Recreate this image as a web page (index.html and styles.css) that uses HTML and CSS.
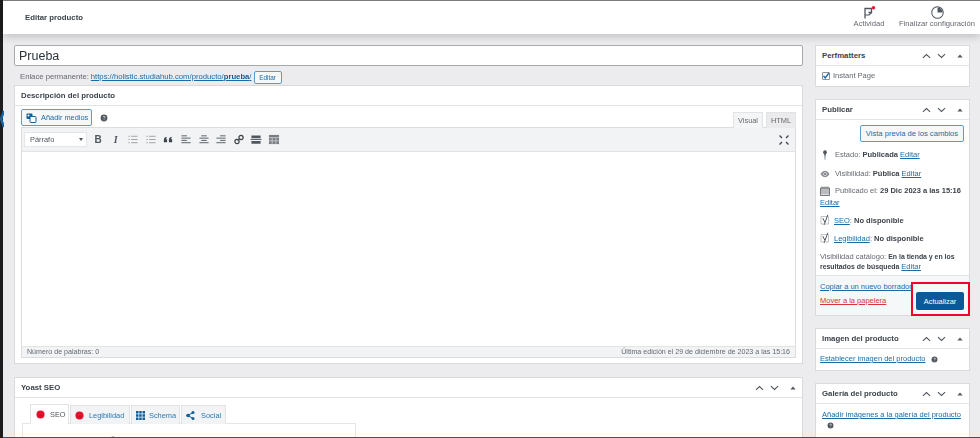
FILE: index.html
```html
<!DOCTYPE html>
<html lang="es">
<head>
<meta charset="utf-8">
<title>Editar producto</title>
<link rel="stylesheet" href="styles.css">
</head>
<body>
<svg class="defs" width="0" height="0" aria-hidden="true">
  <symbol id="up" viewBox="0 0 10 6"><path d="M1 5.2 5 1.4l4 3.8" fill="none" stroke="#50575e" stroke-width="1.2"/></symbol>
  <symbol id="down" viewBox="0 0 10 6"><path d="M1 .8 5 4.6 9 .8" fill="none" stroke="#50575e" stroke-width="1.2"/></symbol>
  <symbol id="tri" viewBox="0 0 6 4"><path d="M3 .5 5.6 3.5H.4z" fill="#50575e"/></symbol>
  <symbol id="help" viewBox="0 0 8 8"><circle cx="4" cy="4" r="3.4" fill="#50575e"/><path d="M3 3.2c0-1.2 2.1-1.2 2.1 0 0 .7-1 .7-1 1.4M4.1 5.4v.7" fill="none" stroke="#fff" stroke-width=".7"/></symbol>
  <symbol id="yoast" viewBox="0 0 10 12"><path d="M1 2.500h7.500v7.500H1z" fill="#fff" stroke="#a7aaad" stroke-width=".7"/><path d="M2.800 4.200 5 8.500 7.800 .8" fill="none" stroke="#50575e" stroke-width="1"/><path d="M5 8.500 4 11" fill="none" stroke="#50575e" stroke-width=".9"/></symbol>
  <symbol id="face" viewBox="0 0 10 10"><circle cx="5" cy="5" r="4.500" fill="#e8112d"/><path d="M3 6.500h4" stroke="#a50c20" stroke-width=".7"/><path d="M3.200 3.900h.6M6.200 3.900h.6" stroke="#a50c20" stroke-width=".8"/></symbol>
</svg>
<div class="page">
  <div class="strip"><svg class="strip-arrow" width="4" height="18" viewBox="0 0 4 18"><path d="M4 1 1 9l3 8" fill="none" stroke="#1266a8" stroke-width="2.400"/></svg></div>
  <div class="app">
    <header class="topbar">
      <h1 class="page-title">Editar producto</h1>
      <div class="top-actions">
        <div class="top-action act-one">
          <svg width="14" height="13" viewBox="0 0 14 13"><path d="M3 12.500V2.500h6.500V6.500H6.500" fill="none" stroke="#50575e" stroke-width="1.300"/><path d="M9.500 6.500 7 9H3" fill="none" stroke="#50575e" stroke-width="1.200"/><circle cx="11.500" cy="1.800" r="1.700" fill="#e8112d"/></svg>
          <span>Actividad</span>
        </div>
        <div class="top-action act-two">
          <svg width="13" height="13" viewBox="0 0 14 14"><circle cx="7" cy="7" r="6.200" fill="none" stroke="#50575e" stroke-width="1.100"/><path d="M7 7V1.500A5.500 5.500 0 0 1 12.500 7z" fill="#50575e"/></svg>
          <span>Finalizar configuración</span>
        </div>
      </div>
    </header>
    <main class="content">
      <section class="col-main">
        <div class="title-input">Prueba</div>
        <div class="permalink">
          <span class="label">Enlace permanente:</span>
          <a class="link" href="#">https://holistic.studiahub.com/producto/<b>prueba</b>/</a>
          <span class="btn btn-small">Editar</span>
        </div>
        <div class="box box-editor">
          <div class="box-head plain"><h2>Descripción del producto</h2></div>
          <div class="editor-top">
            <span class="btn btn-media">
              <svg width="11" height="10" viewBox="0 0 11 10"><rect x=".5" y=".5" width="6" height="5.500" rx="1" fill="#135e96"/><rect x="4" y="3.500" width="6" height="6" rx="1" fill="#fff" stroke="#135e96"/><circle cx="2.500" cy="2.500" r="1" fill="#fff"/></svg>
              Añadir medios
            </span>
            <svg class="help-gap" width="8" height="8"><use href="#help"/></svg>
            <div class="tabs-right">
              <span class="mode active">Visual</span>
              <span class="mode">HTML</span>
            </div>
          </div>
          <div class="editor-frame">
            <div class="toolbar">
              <span class="select">Párrafo<i class="caret"></i></span>
              <div class="tools">
                <span class="tool bold">B</span>
                <span class="tool ital">I</span>
                <svg class="ico" width="12" height="11" viewBox="0 0 12 12"><path d="M4 2.500h7M4 6h7M4 9.500h7M1 2.500h1.500M1 6h1.500M1 9.500h1.500" stroke="#9a9da1"/></svg>
                <svg class="ico" width="12" height="11" viewBox="0 0 12 12"><path d="M4 2.500h7M4 6h7M4 9.500h7M1 2.500h1.500M1 6h1.500M1 9.500h1.500" stroke="#9a9da1"/></svg>
                <svg class="ico" width="12" height="11" viewBox="0 0 12 12"><path d="M1.500 9V6.200C1.500 4.500 2.500 3.500 4.500 3v1.500c-.8.300-1 .7-1 1.200H5V9zM7 9V6.200C7 4.500 8 3.500 10 3v1.500c-.8.300-1 .7-1 1.200h1.500V9z" fill="#3c434a"/></svg>
                <svg class="ico" width="12" height="11" viewBox="0 0 12 12"><path d="M1 2h6M1 4.500h10M1 7h6M1 9.500h10" stroke="#50575e"/></svg>
                <svg class="ico" width="12" height="11" viewBox="0 0 12 12"><path d="M3 2h6M1 4.500h10M3 7h6M1 9.500h10" stroke="#50575e"/></svg>
                <svg class="ico" width="12" height="11" viewBox="0 0 12 12"><path d="M5 2h6M1 4.500h10M5 7h6M1 9.500h10" stroke="#50575e"/></svg>
                <svg class="ico" width="12" height="11" viewBox="0 0 12 12"><circle cx="3.800" cy="8.200" r="2.300" fill="none" stroke="#3c434a" stroke-width="1.300"/><circle cx="8.200" cy="3.800" r="2.300" fill="none" stroke="#3c434a" stroke-width="1.300"/><path d="M5 7l2-2" stroke="#3c434a"/></svg>
                <svg class="ico" width="12" height="11" viewBox="0 0 12 12"><path d="M1 1.500h10v3H1zM1 7.500h10v3H1z" fill="#50575e"/><path d="M0 6h12" stroke="#50575e"/></svg>
                <svg class="ico" width="12" height="11" viewBox="0 0 12 12"><path d="M.5 1h11v10H.5z" fill="#7a7e83"/><path d="M0 4h12M0 7.500h12M4 4v7M8 4v7" stroke="#f2f3f5" stroke-width=".6"/></svg>
              </div>
              <svg class="fullscreen" width="10" height="10" viewBox="0 0 10 10"><path d="M3 3 .5.500M7 3 9.500.500M3 7 .5 9.500M7 7l2.500 2.500" stroke="#3c434a" stroke-width="1.300"/></svg>
            </div>
            <div class="editor-body"></div>
            <div class="statusbar">
              <span>Número de palabras: 0</span>
              <span>Última edición el 29 de diciembre de 2023 a las 15:16</span>
            </div>
          </div>
        </div>
        <div class="box box-yoast">
          <div class="box-head"><h2>Yoast SEO</h2><div class="controls"><svg width="9" height="6"><use href="#up"/></svg><svg width="9" height="6"><use href="#down"/></svg><svg class="c-tri" width="6" height="4"><use href="#tri"/></svg></div></div>
          <div class="yoast-tabs">
            <span class="ytab active"><svg width="9" height="9"><use href="#face"/></svg>SEO</span>
            <span class="ytab t-leg"><svg width="9" height="9"><use href="#face"/></svg>Legibilidad</span>
            <span class="ytab t-sch"><svg width="9" height="9" viewBox="0 0 9 9"><path d="M0 0h2.500v2.500H0zM3.200 0h2.500v2.500H3.200zM6.500 0H9v2.500H6.500zM0 3.200h2.500v2.500H0zM3.200 3.200h2.500v2.500H3.200zM6.500 3.200H9v2.500H6.500zM0 6.500h2.500V9H0zM3.200 6.500h2.500V9H3.200zM6.500 6.500H9V9H6.500z" fill="#135e96"/></svg>Schema</span>
            <span class="ytab t-soc"><svg width="9" height="9" viewBox="0 0 9 9"><path d="M7 1.500 2 4.500l5 3" fill="none" stroke="#135e96"/><circle cx="7" cy="1.500" r="1.500" fill="#135e96"/><circle cx="2" cy="4.500" r="1.800" fill="#135e96"/><circle cx="7" cy="7.500" r="1.500" fill="#135e96"/></svg>Social</span>
          </div>
          <div class="yoast-panel"><span>Frase clave objetivo</span><svg width="8" height="8"><use href="#help"/></svg></div>
        </div>
      </section>
      <aside class="col-side">
        <div class="box side-box perf">
          <div class="box-head"><h2>Perfmatters</h2><div class="controls"><svg width="9" height="6"><use href="#up"/></svg><svg width="9" height="6"><use href="#down"/></svg><svg class="c-tri" width="6" height="4"><use href="#tri"/></svg></div></div>
          <div class="check-row"><span class="checkbox"><svg width="8" height="8" viewBox="0 0 8 8"><path d="M1.500 4 3.300 6 6.800 1.200" fill="none" stroke="#1266a8" stroke-width="1.400"/></svg></span>Instant Page</div>
        </div>
        <div class="box side-box publish">
          <div class="box-head"><h2>Publicar</h2><div class="controls"><svg width="9" height="6"><use href="#up"/></svg><svg width="9" height="6"><use href="#down"/></svg><svg class="c-tri" width="6" height="4"><use href="#tri"/></svg></div></div>
          <div class="pub-main">
            <div class="preview-row"><span class="btn btn-preview">Vista previa de los cambios</span></div>
            <div class="pub-row r-estado"><svg width="10" height="10" viewBox="0 0 10 10"><circle cx="5" cy="2.200" r="1.900" fill="#50575e"/><path d="M3.800 3.500h2.400L5.500 5.500l-.3 4.500h-.4l-.3-4.500z" fill="#50575e"/></svg><span>Estado: <b>Publicada</b> <a class="link" href="#">Editar</a></span></div>
            <div class="pub-row r-vis"><svg width="10" height="8" viewBox="0 0 10 8"><path d="M.5 4C2 1.500 3.500.8 5 .8S8 1.500 9.500 4C8 6.500 6.500 7.200 5 7.200S2 6.500.5 4z" fill="#8c8f94"/><circle cx="5" cy="4" r="1.700" fill="#fff"/><circle cx="5" cy="4" r=".9" fill="#50575e"/></svg><span>Visibilidad: <b>Pública</b> <a class="link" href="#">Editar</a></span></div>
            <div class="pub-row r-date"><svg width="10" height="10" viewBox="0 0 10 10"><path d="M.5 2h9v7.500h-9z" fill="none" stroke="#50575e" stroke-width=".8"/><path d="M2 .5v8M4 .5v8M6 .5v8M8 .5v8" stroke="#50575e" stroke-width=".8"/></svg><span>Publicado el: <b>29 Dic 2023 a las 15:16</b><br><a class="link" href="#">Editar</a></span></div>
            <div class="pub-row r-seo"><svg width="10" height="12"><use href="#yoast"/></svg><span><a class="link" href="#">SEO</a>: <b>No disponible</b></span></div>
            <div class="pub-row r-leg"><svg width="10" height="12"><use href="#yoast"/></svg><span><a class="link" href="#">Legibilidad</a>: <b>No disponible</b></span></div>
            <div class="pub-cat">Visibilidad catálogo: <b>En la tienda y en los resultados de búsqueda</b> <a class="link" href="#">Editar</a></div>
          </div>
          <div class="pub-foot">
            <div class="foot-links">
              <a class="link" href="#">Copiar a un nuevo borrador</a>
              <a class="link danger" href="#">Mover a la papelera</a>
            </div>
            <span class="btn-primary">Actualizar</span>
            <span class="highlight"></span>
          </div>
        </div>
        <div class="box side-box image-box">
          <div class="box-head"><h2>Imagen del producto</h2><div class="controls"><svg width="9" height="6"><use href="#up"/></svg><svg width="9" height="6"><use href="#down"/></svg><svg class="c-tri" width="6" height="4"><use href="#tri"/></svg></div></div>
          <div class="side-link"><a class="link" href="#">Establecer imagen del producto</a><svg width="7" height="7" viewBox="0 0 8 8"><use href="#help"/></svg></div>
        </div>
        <div class="box side-box gallery-box">
          <div class="box-head"><h2>Galería del producto</h2><div class="controls"><svg width="9" height="6"><use href="#up"/></svg><svg width="9" height="6"><use href="#down"/></svg><svg class="c-tri" width="6" height="4"><use href="#tri"/></svg></div></div>
          <div class="gallery-link"><a class="link" href="#">Añadir imágenes a la galería del producto</a><svg width="7" height="7" viewBox="0 0 8 8"><use href="#help"/></svg></div>
        </div>
      </aside>
    </main>
    <div class="bottom-line"></div>
  </div>
</div>
</body>
</html>
```
FILE: styles.css
```css
* { box-sizing: border-box; }
html, body { margin: 0; padding: 0; height: 100%; overflow: hidden; }
body { font-family: "Liberation Sans", Arial, sans-serif; font-size: 7.5px; color: #50575e; background: #ecebee; }
.defs { position: absolute; }
a { text-decoration: underline; }
svg { display: block; flex: none; }
b { font-weight: 700; color: #3c434a; }
h1, h2 { margin: 0; }

.page { display: flex; height: 438px; filter: blur(0.45px); }
.strip { width: 3px; background: #1d1d1f; position: relative; flex: none; }
.strip-arrow { position: absolute; left: 0; top: 110px; }
.app { flex: 1; min-width: 0; display: flex; flex-direction: column; }

.topbar { height: 34px; flex: none; background: #fff; display: flex; align-items: center; justify-content: space-between; box-shadow: 0 3px 8px rgba(0,0,0,.18); position: relative; z-index: 2; border-top: 1px solid #7c7c7c; }
.page-title { font-size: 7.8px; font-weight: 700; color: #3c434a; margin-left: 22px; }
.top-actions { display: flex; height: 100%; }
.top-action { display: flex; flex-direction: column; align-items: center; gap: 0; padding-top: 5px; color: #646970; font-size: 7.6px; line-height: 10px; }
.act-one { width: 50px; }
.act-two { width: 86px; }

.content { flex: 1; min-height: 0; overflow: hidden; display: grid; grid-template-columns: 789px 155px; column-gap: 12px; padding: 11px 10px 0 11px; align-items: start; }

.title-input { height: 21px; background: #fff; border: 1px solid #a6a9ad; border-radius: 2px; font-size: 12.5px; line-height: 20px; padding-left: 4px; color: #2c3338; }
.permalink { height: 19px; padding: 6px 0 0 6px; display: flex; align-items: flex-start; gap: 2px; line-height: 10px; font-size: 7.7px; }
.label { color: #646970; }
.link { color: #1a6ca8; }
.link b { color: #135e96; }
.btn { display: inline-flex; align-items: center; background: #f6f7f7; border: 1px solid #5d9cc9; border-radius: 2px; color: #1a6ca8; }
.btn-small { height: 13px; width: 28px; justify-content: center; font-size: 6.4px; margin-top: -1px; }

.box { background: #fff; border: 1px solid #d9dadc; }
.box-head { height: 20px; display: flex; align-items: center; justify-content: space-between; padding: 0 6px; border-bottom: 1px solid #e2e3e5; }
.box-head h2 { font-size: 7.8px; font-weight: 700; color: #3c434a; }
.controls { display: flex; align-items: center; gap: 6px; }
.c-tri { margin-left: 5px; }

.box-editor { height: 279px; }
.editor-top { height: 22px; display: flex; align-items: flex-end; padding: 0 6px; }
.btn-media { height: 17px; width: 71px; gap: 4px; padding-left: 4px; font-size: 7.4px; margin-bottom: 2px; }
.help-gap { margin: 0 0 6px 8px; }
.tabs-right { margin-left: auto; display: flex; gap: 3px; }
.mode { height: 16px; width: 30px; background: #ebebee; border: 1px solid #e2e3e5; border-bottom: 0; text-align: center; line-height: 15px; color: #646970; font-size: 7.4px; }
.mode.active { background: #f4f5f6; }

.editor-frame { margin: -1px 6px 0; border: 1px solid #dcdcde; height: 231px; display: flex; flex-direction: column; }
.toolbar { height: 24px; flex: none; background: #f2f3f5; border-bottom: 1px solid #e2e3e5; display: flex; align-items: center; padding: 0 6px 0 2px; }
.select { width: 63px; height: 15px; background: #fff; border: 1px solid #e6e6e8; display: flex; align-items: center; justify-content: space-between; padding: 0 3px 0 5px; color: #50575e; font-size: 7.4px; }
.caret { width: 0; height: 0; border: 2.5px solid transparent; border-top: 3px solid #50575e; border-bottom: 0; }
.tools { display: flex; align-items: center; gap: 5.6px; margin-left: 5px; }
.tool { width: 12px; text-align: center; font-size: 10px; color: #50575e; font-weight: 700; }
.ital { font-style: italic; font-family: "Liberation Serif", serif; }
.fullscreen { margin-left: auto; }
.editor-body { flex: 1; background: #fff; }
.statusbar { height: 11px; flex: none; background: #f2f3f5; border-top: 1px solid #e2e3e5; display: flex; justify-content: space-between; align-items: center; padding: 0 5px; font-size: 7.1px; color: #646970; }

.box-yoast { margin-top: 13px; height: 80px; }
.yoast-tabs { display: flex; gap: 1px; padding: 7px 0 0 15px; height: 26px; align-items: flex-start; }
.ytab { height: 19px; display: flex; align-items: center; gap: 5px; padding: 0 4px; background: #f2f3f5; border: 1px solid #e2e3e5; border-bottom: 0; color: #2b7ab3; font-size: 7.4px; white-space: nowrap; }
.ytab.active { background: #fff; color: #50575e; width: 39px; margin-top: -1px; height: 20px; padding: 0 5px; position: relative; z-index: 1; }
.t-leg { width: 60px; }
.t-sch { width: 49px; gap: 4px; }
.t-soc { width: 45px; gap: 6px; }
.yoast-panel { margin-left: 7px; width: 334px; height: 40px; border: 1px solid #e6e6e8; margin-top: -1px; padding: 12px 0 0 9px; display: flex; gap: 4px; font-size: 7.6px; font-weight: 700; color: #3c434a; }

.col-side { display: flex; flex-direction: column; }
.side-box { margin-bottom: 12px; }
.perf { height: 42px; }
.check-row { display: flex; align-items: center; gap: 3px; padding: 5px 0 0 6px; color: #646970; }
.checkbox { width: 8px; height: 8px; background: #fff; border: 1px solid #8c8f94; border-radius: 1px; display: flex; align-items: center; justify-content: center; }

.publish { height: 217px; display: flex; flex-direction: column; }
.pub-main { flex: 1; padding: 5px 5px 0 4px; }
.preview-row { display: flex; justify-content: flex-end; height: 18px; margin-bottom: 6px; }
.btn-preview { width: 104px; height: 17px; justify-content: center; font-size: 7.6px; }
.pub-row { display: flex; gap: 5px; align-items: center; line-height: 11px; color: #646970; }
.r-estado { height: 11px; }
.r-vis { height: 11px; margin-top: 8px; }
.r-date { height: 22px; margin-top: 6px; align-items: flex-start; }
.r-date span { line-height: 12px; }
.r-date svg { margin-top: 1px; }
.r-date .link { margin-left: -15px; }
.r-seo { height: 12px; margin-top: 7px; gap: 4px; }
.r-leg { height: 12px; margin-top: 6px; gap: 4px; }
.pub-cat { margin: 8px -5px 0 0; line-height: 10px; color: #646970; }
.pub-cat b { font-size: 6.9px; }
.pub-foot { height: 40px; flex: none; background: #f6f7f8; border-top: 1px solid #e2e3e5; padding: 0 5px 0 4px; display: flex; justify-content: space-between; align-items: flex-end; position: relative; }
.foot-links { display: flex; flex-direction: column; gap: 5px; align-self: flex-start; padding-top: 6px; line-height: 9px; white-space: nowrap; }
.danger { color: #d63638; }
.btn-primary { width: 48px; height: 18px; background: #0b5a97; color: #fff; border-radius: 2px; display: flex; align-items: center; justify-content: center; font-size: 7.4px; margin-bottom: 5px; position: relative; z-index: 1; }
.highlight { position: absolute; right: -1px; bottom: -1px; width: 59px; height: 34px; border: 2.5px solid #f4002b; }

.image-box { height: 43px; }
.side-link { display: flex; align-items: center; gap: 6px; padding: 5px 0 0 4px; line-height: 10px; white-space: nowrap; }
.gallery-box { height: 60px; margin-bottom: 0; }
.gallery-link { padding: 6px 0 0 6px; line-height: 10px; white-space: nowrap; }
.gallery-link svg { margin: 2px 0 0 5px; }

.bottom-line { height: 1px; flex: none; background: #135e96; position: relative; z-index: 3; }
```
